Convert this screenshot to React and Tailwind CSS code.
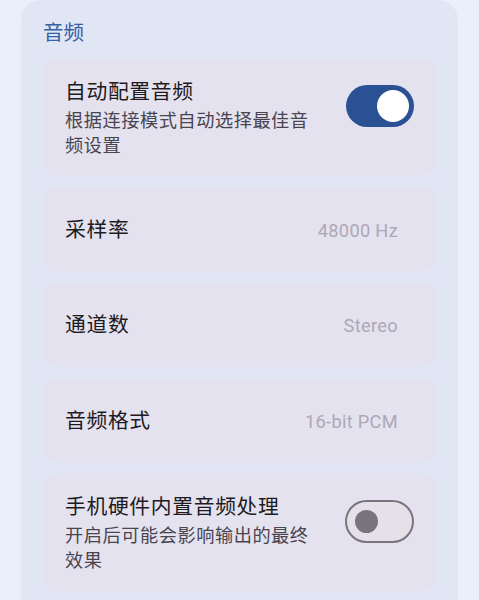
import React from 'react';

const font = { fontFamily: 'Roboto, "Noto Sans CJK SC", "Noto Sans", sans-serif' };

function Toggle({ on }) {
  if (on) {
    return (
      <div className="mt-[7px] w-[68px] h-[42px] rounded-full bg-[#2a5193] flex items-center justify-end px-[5px] shrink-0">
        <div className="w-[32px] h-[32px] rounded-full bg-white" />
      </div>
    );
  }
  return (
    <div className="mt-[7px] w-[69px] h-[43px] rounded-full bg-[#e6e0e9] border-[2.5px] border-[#79747e] flex items-center px-[8px] shrink-0">
      <div className="w-[23px] h-[23px] rounded-full bg-[#79747e]" />
    </div>
  );
}

function SwitchRow({ title, desc, on, height }) {
  return (
    <div className={`bg-[#e5e2f0] rounded-2xl pl-[22px] pr-[22px] pt-[20px] flex items-start ${height}`}>
      <div className="flex-1 min-w-0 pr-[30px]">
        <div className="text-[20.8px] tracking-[0.65px] leading-[28px] text-[#1d1b20]">{title}</div>
        <div className="mt-[2px] text-[18.2px] tracking-[0.55px] leading-[25px] text-[#49454f]">{desc}</div>
      </div>
      <Toggle on={on} />
    </div>
  );
}

function ValueRow({ title, value }) {
  return (
    <div className="bg-[#e5e2f0] rounded-2xl h-[85px] pt-[3px] pl-[22px] pr-[38px] flex items-center justify-between">
      <div className="text-[20.8px] tracking-[0.65px] text-[#1d1b20]">{title}</div>
      <div className="text-[18.2px] tracking-[0.33px] text-[#aca8b6]">{value}</div>
    </div>
  );
}

export default function App() {
  return (
    <div className="min-h-[600px] bg-[#eaf0fb] px-[21px] overflow-hidden" style={font}>
      <div className="bg-[#e0e6f3] rounded-t-[20px] px-[22px] pt-[19px] pb-[20px] h-[620px]">
        <div className="text-[20.5px] leading-[28px] text-[#3561a6] mb-[11px]">音频</div>
        <div className="flex flex-col gap-[10.5px]">
          <SwitchRow
            title="自动配置音频"
            desc="根据连接模式自动选择最佳音频设置"
            on
            height="h-[118px]"
          />
          <ValueRow title="采样率" value="48000 Hz" />
          <ValueRow title="通道数" value="Stereo" />
          <ValueRow title="音频格式" value="16-bit PCM" />
          <SwitchRow
            title="手机硬件内置音频处理"
            desc="开启后可能会影响输出的最终效果"
            on={false}
            height="h-[119px]"
          />
        </div>
      </div>
    </div>
  );
}
